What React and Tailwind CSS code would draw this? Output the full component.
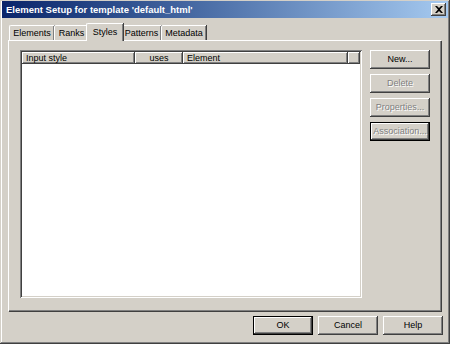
import React from "react";

const raised =
  "shadow-[inset_-1px_-1px_#404040,inset_1px_1px_#ffffff,inset_-2px_-2px_#808080]";

function Button({ label, disabled, isDefault, className = "" }) {
  return (
    <div
      className={`flex items-center justify-center bg-[#d4d0c8] ${
        isDefault
          ? "border border-black shadow-[inset_-1px_-1px_#404040,inset_1px_1px_#ffffff,inset_-2px_-2px_#808080]"
          : raised
      } ${
        disabled
          ? "text-[#808080] [text-shadow:1px_1px_0_#ffffff]"
          : "text-black"
      } ${className}`}
    >
      {label}
    </div>
  );
}

function Tab({ label, width, selected }) {
  if (selected) {
    return (
      <div
        className={`relative z-10 -mb-px -mx-[2px] h-[18px] flex items-start justify-center pt-[2px] bg-[#d4d0c8] border-l border-t border-white rounded-tl-[2px] shadow-[1px_0_0_#404040,inset_-1px_0_0_#808080] ${width}`}
      >
        {label}
      </div>
    );
  }
  return (
    <div
      className={`h-[15px] flex items-start justify-center pt-[1px] bg-[#d4d0c8] border-l border-t border-white rounded-tl-[2px] shadow-[1px_0_0_#404040,inset_-1px_0_0_#808080] ${width}`}
    >
      {label}
    </div>
  );
}

function HeaderCell({ label, width, align = "justify-start pl-[4px]" }) {
  return (
    <div
      className={`h-[12px] flex items-center bg-[#d4d0c8] ${raised} ${align} ${width}`}
    >
      <span className="leading-none">{label}</span>
    </div>
  );
}

export default function App() {
  return (
    <div className="w-[450px] h-[344px] bg-[#d4d0c8] text-[9px] text-black font-['Liberation_Sans',Arial,sans-serif] shadow-[inset_-1px_-1px_#404040,inset_1px_1px_#d4d0c8,inset_-2px_-2px_#808080,inset_2px_2px_#ffffff] pt-[1px] px-[1px] flex flex-col">
      {/* Title bar */}
      <div className="h-[17px] mx-[1px] flex items-center justify-between pl-[4px] pr-[2px] bg-gradient-to-r from-[#0a246a] to-[#a6caf0]">
        <span className="text-white font-bold text-[9.5px] leading-none">
          Element Setup for template 'default_html'
        </span>
        <div
          className={`w-[15px] h-[13px] flex items-center justify-center bg-[#d4d0c8] ${raised}`}
        >
          <svg width="8" height="7" viewBox="0 0 8 7">
            <path
              d="M0 0h2l2 2 2-2h2L5 3.5 8 7H6L4 5 2 7H0l3-3.5z"
              fill="#000"
            />
          </svg>
        </div>
      </div>

      {/* Tabs */}
      <div className="mt-[5px] pl-[8px] flex items-end h-[17px]">
        <Tab label="Elements" width="w-[45px]" />
        <Tab label="Ranks" width="w-[34px]" />
        <Tab label="Styles" width="w-[37px]" selected />
        <Tab label="Patterns" width="w-[40px]" />
        <Tab label="Metadata" width="w-[45px]" />
      </div>

      {/* Tab panel */}
      <div className="ml-[7px] w-[433px] h-[271px] bg-[#d4d0c8] border-t border-l border-white shadow-[1px_1px_0_#404040,inset_-1px_-1px_#808080] flex gap-[8px] pl-[11px] pt-[9px]">
        <div className="w-[342px] h-[248px] bg-white p-[2px] shadow-[inset_1px_1px_#808080,inset_-1px_-1px_#ffffff,inset_2px_2px_#404040,inset_-2px_-2px_#d4d0c8]">
          <div className="flex">
            <HeaderCell label="Input style" width="w-[113px]" />
            <HeaderCell
              label="uses"
              width="w-[48px]"
              align="justify-center"
            />
            <HeaderCell label="Element" width="w-[165px]" />
            <HeaderCell label="" width="flex-1" />
          </div>
        </div>
        <div className="flex flex-col gap-[5px] w-[60px]">
          <Button label="New..." className="h-[19px]" />
          <Button label="Delete" disabled className="h-[19px]" />
          <Button label="Properties..." disabled className="h-[19px]" />
          <Button label="Association..." disabled isDefault className="h-[19px]" />
        </div>
      </div>

      {/* Bottom buttons */}
      <div className="mt-[5px] flex justify-end gap-[5px] pr-[6px]">
        <Button label="OK" isDefault className="w-[60px] h-[19px]" />
        <Button label="Cancel" className="w-[60px] h-[19px]" />
        <Button label="Help" className="w-[60px] h-[19px]" />
      </div>
    </div>
  );
}
